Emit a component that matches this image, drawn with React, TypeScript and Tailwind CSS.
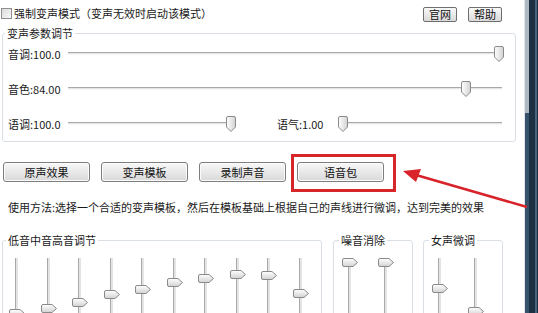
import React from "react";

const HThumb = () => (
  <svg width="10" height="16" viewBox="0 0 10 16" className="block">
    <defs>
      <linearGradient id="hthumb" x1="0" x2="1" y1="0" y2="0">
        <stop offset="0" stopColor="#ffffff" />
        <stop offset="1" stopColor="#d2d2d2" />
      </linearGradient>
    </defs>
    <path d="M2 0.5 H8 Q9.5 0.5 9.5 2 V11 L5 15.5 L0.5 11 V2 Q0.5 0.5 2 0.5 Z" fill="url(#hthumb)" stroke="#8a8a8a" />
  </svg>
);

const VThumb = () => (
  <svg width="16" height="9" viewBox="0 0 16 9" className="block">
    <defs>
      <linearGradient id="vthumb" x1="0" x2="0" y1="0" y2="1">
        <stop offset="0" stopColor="#ffffff" />
        <stop offset="1" stopColor="#d2d2d2" />
      </linearGradient>
    </defs>
    <path d="M2 0.5 H11 L15.5 4.5 L11 8.5 H2 Q0.5 8.5 0.5 7 V2 Q0.5 0.5 2 0.5 Z" fill="url(#vthumb)" stroke="#8a8a8a" />
  </svg>
);

function HSlider({ className, pct }: { className: string; pct: number }) {
  return (
    <div className={"relative h-[16px] " + className}>
      <div className="absolute left-[4px] right-[2px] top-[6px] h-[3px] bg-[#e6e6e6] border-t border-[#a9a9a9] border-b border-b-[#f7f7f7]" />
      <div className="absolute top-0" style={{ left: `calc(${pct}% - ${(pct / 100) * 10}px)` }}>
        <HThumb />
      </div>
    </div>
  );
}

function VSlider({ top }: { top: number }) {
  return (
    <div className="relative w-[16px] h-[70px]">
      <div className="absolute left-[6px] top-0 bottom-0 w-[3px] bg-[#e4e4e4] border-l border-[#a9a9a9]" />
      <div className="absolute left-0" style={{ top }}>
        <VThumb />
      </div>
    </div>
  );
}

const Btn = ({ children }: { children: React.ReactNode }) => (
  <button className="w-[87px] h-[20px] rounded-[3px] border border-[#7e7e7e] bg-linear-to-b from-[#f8f8f8] to-[#d9d9d9] text-[11px] leading-none text-[#111] shadow-[inset_0_0_0_1px_#fbfbfb]">
    {children}
  </button>
);

const SmallBtn = ({ children }: { children: React.ReactNode }) => (
  <button className="w-[34px] h-[15px] rounded-[2px] border border-[#6f6f6f] bg-linear-to-b from-[#fafafa] to-[#dadada] text-[11px] leading-none text-[#111]">
    {children}
  </button>
);

const bass = [50.5, 45.5, 39.5, 31.5, 26.5, 19.5, 15.5, 11.5, 12.5, 30.5];

export default function App() {
  return (
    <div className="relative w-[538px] h-[313px] overflow-hidden bg-white flex font-['Noto_Sans_CJK_SC',sans-serif] text-[#1a1a1a]">
      {/* main panel */}
      <div className="flex-1 flex flex-col pl-[2px] pr-[8px] [&>*]:shrink-0">
        <div className="h-[26px] flex items-center">
          <span className="w-[11px] h-[11px] -ml-[1px] border border-[#8e8e8e] bg-linear-to-br from-[#dcdcdc] to-[#f8f8f8]" />
          <span className="ml-[2px] text-[11px] leading-[14px]">强制变声模式（变声无效时启动该模式）</span>
          <div className="ml-auto mr-[14px] mt-[3px] flex gap-[11px]">
            <SmallBtn>官网</SmallBtn>
            <SmallBtn>帮助</SmallBtn>
          </div>
        </div>

        <fieldset className="m-0 min-w-0 border border-[#d9dfe4] rounded-[3px] pl-[5px] pr-0 pt-[2px] pb-[5px] flex flex-col gap-[11px]">
          <legend className="-ml-[3px] px-[2px] text-[11px] leading-[14px]">变声参数调节</legend>
          <div className="h-[24px] flex items-center">
            <span className="w-[56px] text-[11px]">音调:100.0</span>
            <HSlider className="w-[440px]" pct={100} />
          </div>
          <div className="h-[24px] flex items-center">
            <span className="w-[56px] text-[11px]">音色:84.00</span>
            <HSlider className="w-[440px]" pct={92.3} />
          </div>
          <div className="h-[24px] flex items-center">
            <span className="w-[56px] text-[11px]">语调:100.0</span>
            <HSlider className="w-[172px]" pct={100} />
            <span className="ml-[41px] w-[61px] text-[11px]">语气:1.00</span>
            <HSlider className="w-[166px]" pct={0} />
          </div>
        </fieldset>

        <div className="mt-[20px] ml-[1px] flex gap-[11px]">
          <Btn>原声效果</Btn>
          <Btn>变声模板</Btn>
          <Btn>录制声音</Btn>
          <Btn>语音包</Btn>
        </div>

        <p className="mt-[18px] ml-[6px] h-[14px] text-[11px] leading-[14px] whitespace-nowrap">
          使用方法:选择一个合适的变声模板，然后在模板基础上根据自己的声线进行微调，达到完美的效果
        </p>

        <div className="mt-[19px] flex">
          <fieldset className="m-0 min-w-0 w-[320px] h-[100px] border border-[#d9dfe4] rounded-[3px] pl-[6px] pr-0 pt-[11px] flex gap-[15.5px]">
            <legend className="-ml-[3px] px-[2px] text-[11px] leading-[14px]">低音中音高音调节</legend>
            {bass.map((t, i) => (
              <VSlider key={i} top={t} />
            ))}
          </fieldset>
          <fieldset className="m-0 min-w-0 ml-[11px] w-[80px] h-[100px] border border-[#d9dfe4] rounded-[3px] pl-[8px] pr-0 pt-[11px] flex gap-[20px]">
            <legend className="-ml-[3px] px-[2px] text-[11px] leading-[14px]">噪音消除</legend>
            <VSlider top={0} />
            <VSlider top={0} />
          </fieldset>
          <fieldset className="m-0 min-w-0 ml-[10px] w-[80px] h-[100px] border border-[#d9dfe4] rounded-[3px] pl-[8px] pr-0 pt-[11px] flex gap-[20px]">
            <legend className="-ml-[3px] px-[2px] text-[11px] leading-[14px]">女声微调</legend>
            <VSlider top={25.5} />
            <VSlider top={48.5} />
          </fieldset>
        </div>
      </div>

      {/* window edge */}
      <div className="w-[14px] flex">
        <div className="w-[1px] bg-[#dfe5ea]" />
        <div className="w-[4px] flex flex-col">
          <div className="h-[113px] bg-[#aeb9c2]" />
          <div className="flex-1 bg-[#36536b]" />
        </div>
        <div className="w-[6px] bg-[#1c3044]" />
        <div className="w-[2px] bg-[#48637a]" />
        <div className="w-[1px] bg-[#1c3044]" />
      </div>

      {/* annotation overlay */}
      <div className="absolute left-[291px] top-[154px] w-[105px] h-[38px] border-[3px] border-[#d6262a]" />
      <svg className="absolute inset-0 pointer-events-none" width="538" height="313">
        <line x1="527" y1="207" x2="416" y2="175" stroke="#d8232a" strokeWidth="2.5" />
        <polygon points="403,171 421,169 416,182" fill="#d8232a" />
      </svg>
    </div>
  );
}
